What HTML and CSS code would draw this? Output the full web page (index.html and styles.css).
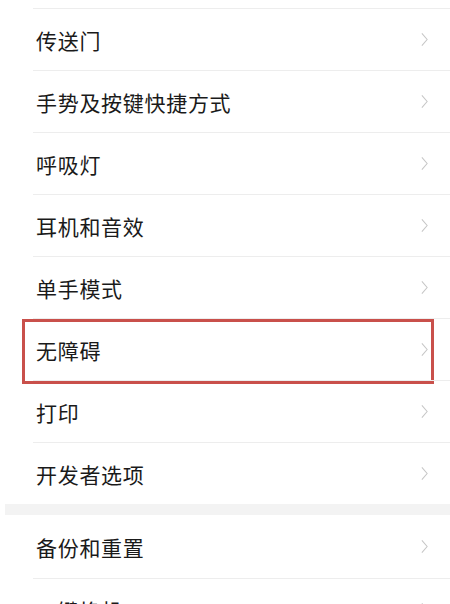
FILE: index.html
```html
<!DOCTYPE html>
<html lang="zh-CN">
<head>
  <meta charset="UTF-8">
  <meta name="viewport" content="width=device-width, initial-scale=1.0">
  <title>设置</title>
  <link rel="stylesheet" href="styles.css">
</head>
<body>
  <div class="screen">
    <div class="top-gap"></div>

    <ul class="group">
      <li class="item"><span class="label">传送门</span><svg class="chevron" viewBox="0 0 8 16"><polyline points="1,1 7,8 1,15"/></svg></li>
      <li class="item"><span class="label">手势及按键快捷方式</span><svg class="chevron" viewBox="0 0 8 16"><polyline points="1,1 7,8 1,15"/></svg></li>
      <li class="item"><span class="label">呼吸灯</span><svg class="chevron" viewBox="0 0 8 16"><polyline points="1,1 7,8 1,15"/></svg></li>
      <li class="item"><span class="label">耳机和音效</span><svg class="chevron" viewBox="0 0 8 16"><polyline points="1,1 7,8 1,15"/></svg></li>
      <li class="item"><span class="label">单手模式</span><svg class="chevron" viewBox="0 0 8 16"><polyline points="1,1 7,8 1,15"/></svg></li>
      <li class="item highlighted">
        <span class="label">无障碍</span><svg class="chevron" viewBox="0 0 8 16"><polyline points="1,1 7,8 1,15"/></svg>
        <div class="mark"></div>
      </li>
      <li class="item"><span class="label">打印</span><svg class="chevron" viewBox="0 0 8 16"><polyline points="1,1 7,8 1,15"/></svg></li>
      <li class="item"><span class="label">开发者选项</span><svg class="chevron" viewBox="0 0 8 16"><polyline points="1,1 7,8 1,15"/></svg></li>
    </ul>

    <div class="section-gap"></div>

    <ul class="group second">
      <li class="item"><span class="label">备份和重置</span><svg class="chevron" viewBox="0 0 8 16"><polyline points="1,1 7,8 1,15"/></svg></li>
      <li class="item"><span class="label">一键换机</span><svg class="chevron" viewBox="0 0 8 16"><polyline points="1,1 7,8 1,15"/></svg></li>
    </ul>
  </div>
</body>
</html>
```

FILE: styles.css
```css
body {
  margin: 0;
  background-color: #ffffff;
  font-family: "Noto Sans CJK SC", "Noto Sans", sans-serif;
}
.screen {
  width: 450px;
  height: 604px;
  overflow: hidden;
}
.top-gap {
  height: 8px;
}
.group {
  list-style: none;
  margin: 0;
  padding: 0;
}
.item {
  position: relative;
  display: flex;
  align-items: center;
  justify-content: space-between;
  box-sizing: border-box;
  height: 62px;
  margin-left: 33px;
  padding: 0 22px 0 3px;
  border-top: 1px solid #ededed;
}
.second .item:first-child {
  border-top: none;
  height: 63px;
}
.label {
  font-size: 21px;
  color: #1a1a1a;
  letter-spacing: 0.7px;
}
.chevron {
  width: 7px;
  height: 15px;
  fill: none;
  stroke: #c6c6c6;
  stroke-width: 1.2;
}
.section-gap {
  height: 11px;
  margin-left: 5px;
  background-color: #f3f3f3;
}
.mark {
  position: absolute;
  left: -11px;
  right: 16px;
  top: 0;
  bottom: -4px;
  border: 3px solid #c9504b;
}
```
